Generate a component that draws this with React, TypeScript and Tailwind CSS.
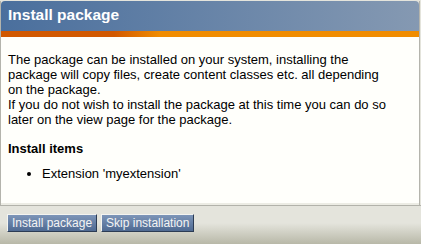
export default function App() {
  return (
    <div className="w-[421px] h-[244px] bg-[#e4e4dc] pt-px font-['Liberation_Sans',Arial,sans-serif] overflow-hidden">
      <div className="w-[420px] border-l border-r border-[#b4b4ac]">
        <div className="h-[30px] rounded-t-[4px] bg-gradient-to-r from-[#4a6f9d] to-[#8599b2] pl-[7px] pt-[5px]">
          <h1 className="text-white font-bold text-[15.5px] leading-[18px]">Install package</h1>
        </div>
        <div className="h-[6px] bg-[linear-gradient(to_right,#d15800_0%,#d15800_27%,#f08c00_38%,#f08c00_100%)]" />
        <div className="h-[166px] bg-[#fffffb] px-[7px] pt-[15px] text-[13px] leading-[15px] text-black">
          <p>
            The package can be installed on your system, installing the
            <br />
            package will copy files, create content classes etc. all depending
            <br />
            on the package.
            <br />
            If you do not wish to install the package at this time you can do so
            <br />
            later on the view page for the package.
          </p>
          <h2 className="mt-[14px] font-bold text-[13px] leading-[15px]">Install items</h2>
          <ul className="mt-[10px] list-disc pl-[34px]">
            <li>Extension 'myextension'</li>
          </ul>
        </div>
        <div className="h-[2px] bg-[#ececE4]" />
      </div>
      <div className="h-[39px] border-t border-[#b2b2aa] bg-[linear-gradient(to_bottom,#e4e4dc_0%,#e4e4dc_45%,#b8b8a8_100%)] px-[7px] pt-[8px] flex gap-[4px] items-start">
        <button className="h-[18px] px-[4px] border border-t-[#f4f4f0] border-l-[#f4f4f0] border-b-[#2c3c54] border-r-[#2c3c54] bg-gradient-to-b from-[#7d95b8] to-[#4f6a92] text-[#f4f4f4] text-[12px] leading-[15px]">
          Install package
        </button>
        <button className="h-[18px] px-[4px] border border-t-[#f4f4f0] border-l-[#f4f4f0] border-b-[#2c3c54] border-r-[#2c3c54] bg-gradient-to-b from-[#7d95b8] to-[#4f6a92] text-[#f4f4f4] text-[12px] leading-[15px]">
          Skip installation
        </button>
      </div>
    </div>
  )
}
